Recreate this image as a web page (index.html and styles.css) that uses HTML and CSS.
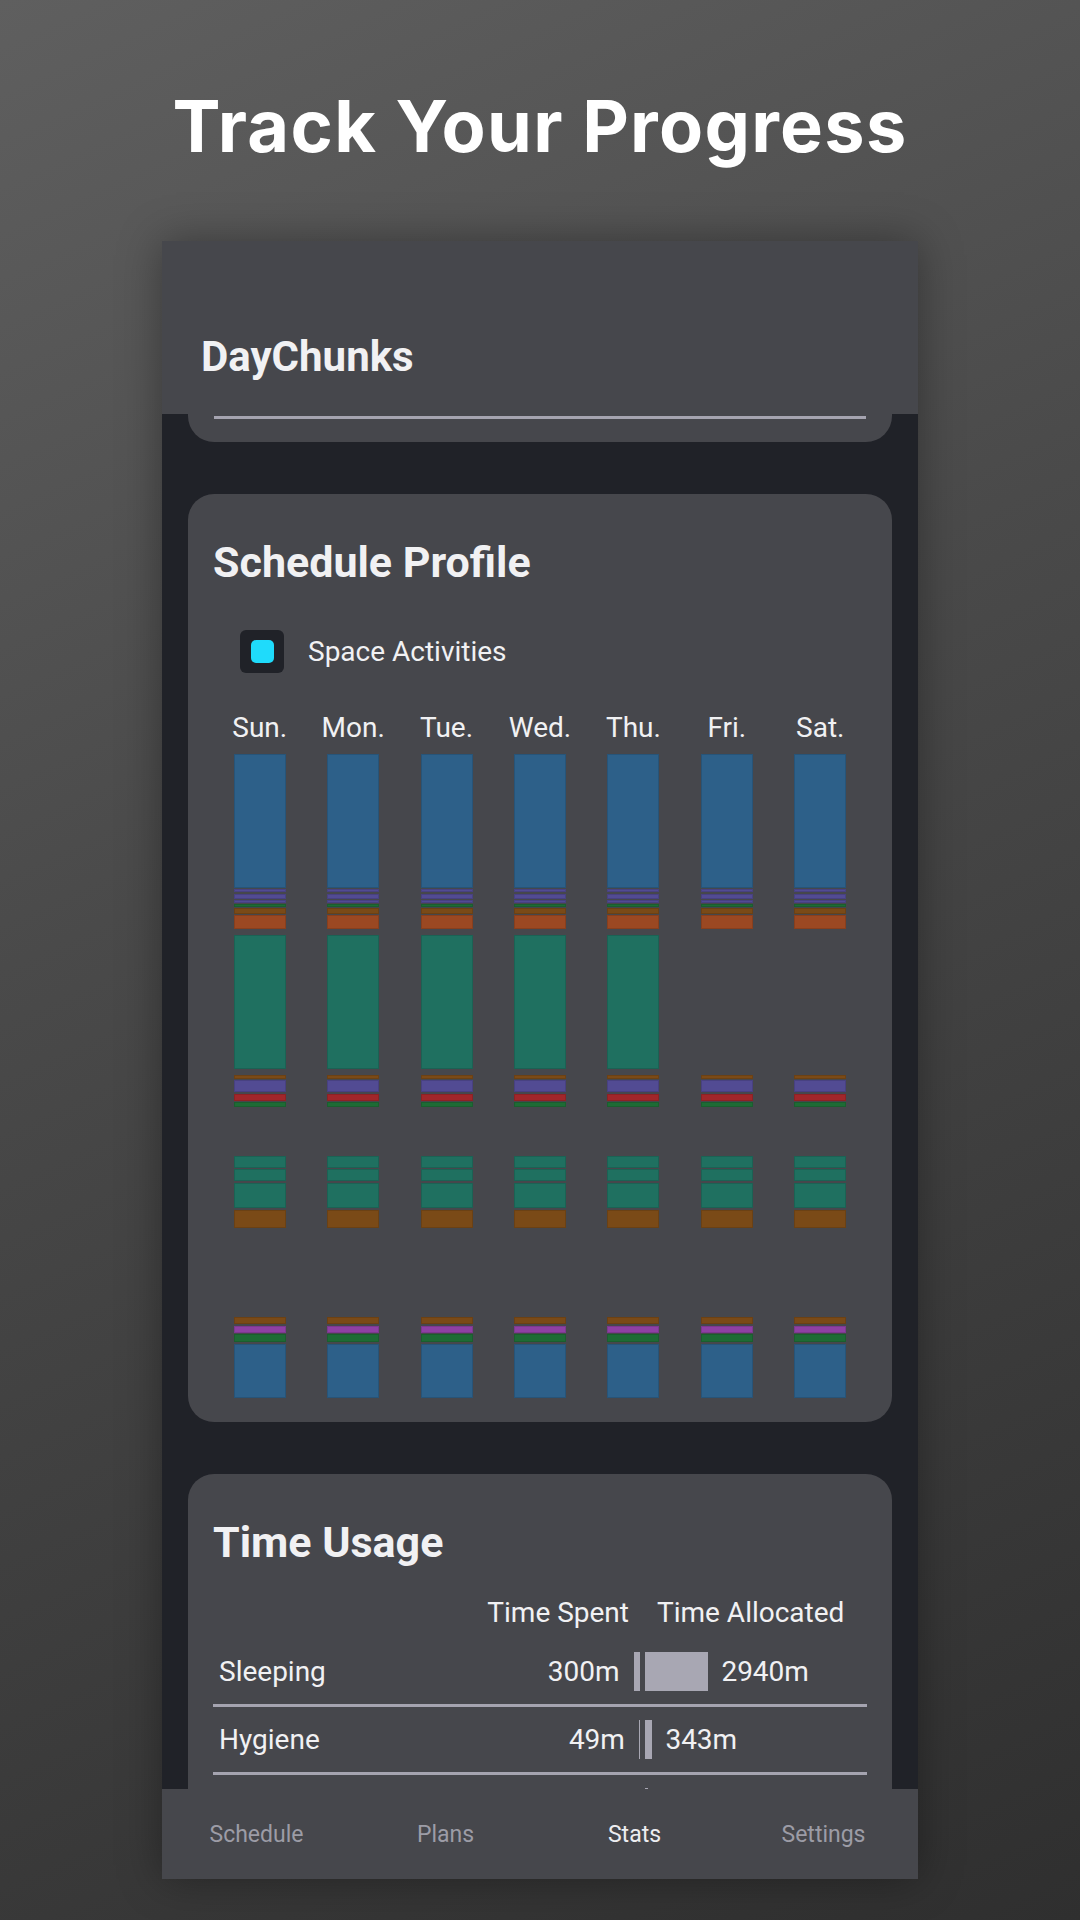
FILE: index.html
```html
<!DOCTYPE html>
<html lang="en">
<head>
    <meta charset="UTF-8">
    <meta name="viewport" content="width=device-width, initial-scale=1.0">
    <title>DayChunks - Track Your Progress</title>
    <link rel="stylesheet" href="styles.css">
</head>
<body>
    <h1 class="headline">Track Your Progress</h1>

    <div class="phone">
        <header class="app_bar">
            <h2>DayChunks</h2>
        </header>

        <main class="scroll">
            <section class="card card_cut">
                <div class="rule"></div>
            </section>

            <section class="card">
                <h3>Schedule Profile</h3>
                <div class="legend">
                    <span class="swatch"><i></i></span>
                    Space Activities
                </div>
                <div class="week" id="week"></div>
            </section>

            <section class="card">
                <h3>Time Usage</h3>
                <div class="usage_head">
                    <span class="spent_h">Time Spent</span>
                    <span class="alloc_h">Time Allocated</span>
                </div>
                <div id="usage"></div>
            </section>
        </main>

        <nav class="tabs">
            <a href="#">Schedule</a>
            <a href="#">Plans</a>
            <a href="#" class="active">Stats</a>
            <a href="#">Settings</a>
        </nav>
    </div>

    <script>
        var days = ['Sun.', 'Mon.', 'Tue.', 'Wed.', 'Thu.', 'Fri.', 'Sat.'];
        // top, height (px on a 644px day), colour, weekdays only
        var blocks = [
            [0, 134, 'blue'],
            [135, 3, 'purple'],
            [139.5, 5.5, 'purple'],
            [146, 2.5, 'purple'],
            [149.5, 3.5, 'green'],
            [154, 6, 'brown'],
            [161, 13.5, 'orange'],
            [180.5, 134.5, 'teal', true],
            [321, 3.5, 'brown'],
            [326, 11.5, 'purple'],
            [339.5, 7, 'red'],
            [348, 5, 'green'],
            [402, 11.5, 'teal'],
            [415, 11.5, 'teal'],
            [429, 24.5, 'teal'],
            [455.5, 18, 'brown'],
            [562.5, 7, 'brown'],
            [571.5, 7, 'magenta'],
            [580, 8, 'green'],
            [589.5, 54, 'blue']
        ];

        var week = document.getElementById('week');
        for (var d = 0; d < days.length; d++) {
            var col = document.createElement('div');
            col.className = 'day';
            var label = document.createElement('span');
            label.className = 'day_name';
            label.textContent = days[d];
            col.append(label);

            var bar = document.createElement('div');
            bar.className = 'bar';
            for (var b = 0; b < blocks.length; b++) {
                if (blocks[b][3] && d >= 5) continue; // no work on fri/sat
                var seg = document.createElement('div');
                seg.className = 'seg ' + blocks[b][2];
                seg.style.top = blocks[b][0] + 'px';
                seg.style.height = blocks[b][1] + 'px';
                bar.append(seg);
            }
            col.append(bar);
            week.append(col);
        }

        // name, spent, allocated (minutes)
        var usage = [
            ['Sleeping', 300, 2940],
            ['Hygiene', 49, 343],
            ['', 0, 140] // next row, scrolled under the tab bar
        ];
        var scale = 63.4 / 2940;
        var table = document.getElementById('usage');
        usage.forEach(function (u) {
            var row = document.createElement('div');
            row.className = 'usage_row';
            var spentText = u[0] ? u[1] + 'm' : '';
            var allocText = u[0] ? u[2] + 'm' : '';
            row.innerHTML =
                '<span class="name">' + u[0] + '</span>' +
                '<span class="spent">' + spentText + '<i class="meter" style="width:' + (u[1] * scale).toFixed(1) + 'px"></i></span>' +
                '<span class="alloc"><i class="meter" style="width:' + (u[2] * scale).toFixed(1) + 'px"></i>' + allocText + '</span>';
            table.append(row);
        });
    </script>
</body>
</html>
```

FILE: styles.css
```css
* {
    margin: 0;
    padding: 0;
    box-sizing: border-box;
}

body {
    width: 1080px;
    height: 1920px;
    overflow: hidden;
    display: flex;
    flex-direction: column;
    align-items: center;
    background: linear-gradient(155deg, #5f5f5f 0%, #4a4a4a 40%, #2f2f2f 100%);
    font-family: Roboto, "Noto Sans", sans-serif;
    color: #f1f1f3;
}

a {
    color: inherit;
    text-decoration: none;
}

i {
    display: block;
}

.headline {
    margin-top: 86px;
    height: 80px;
    line-height: 80px;
    font-family: Inter, "Open Sans", sans-serif;
    font-size: 72px;
    font-weight: 700;
    letter-spacing: 1.3px;
    color: #fff;
}

/* phone frame */
.phone {
    margin-top: 75px;
    width: 756px;
    height: 1638px;
    display: flex;
    flex-direction: column;
    background: #202228;
    box-shadow: 0 0 40px rgba(0, 0, 0, 0.35);
}

.app_bar {
    height: 173px;
    flex-shrink: 0;
    padding: 91px 39px 0;
    background: #46474c;
}

.app_bar h2 {
    font-size: 42px;
    line-height: 50px;
    font-weight: 700;
}

.scroll {
    flex: 1;
    overflow: hidden;
    display: flex;
    flex-direction: column;
    gap: 52px;
    padding: 0 26px;
}

.card {
    flex-shrink: 0;
    padding: 42px 25px 24px;
    border-radius: 26px;
    background: #46474c;
}

.card h3 {
    font-size: 43px;
    line-height: 52px;
    font-weight: 700;
}

.card_cut {
    height: 28px;
    padding: 2px 26px 0;
    border-radius: 0 0 26px 26px;
}

.rule {
    height: 3px;
    background: #a5a4b0;
}

/* schedule profile */
.legend {
    display: flex;
    align-items: center;
    gap: 24px;
    margin: 42px 0 0 27px;
    font-size: 28px;
}

.swatch {
    width: 44px;
    height: 43px;
    display: flex;
    align-items: center;
    justify-content: center;
    border-radius: 6px;
    background: #202228;
}

.swatch i {
    width: 23px;
    height: 23px;
    border-radius: 5px;
    background: #1fdbfb;
}

.week {
    display: grid;
    grid-template-columns: repeat(7, 1fr);
    margin-top: 38px;
}

.day {
    display: flex;
    flex-direction: column;
    align-items: center;
}

.day_name {
    font-size: 28px;
    line-height: 34px;
    margin-bottom: 9px;
}

.bar {
    position: relative;
    width: 52px;
    height: 644px;
}

.seg {
    position: absolute;
    left: 0;
    right: 0;
    box-shadow: inset 0 0 0 1px rgba(0, 0, 0, 0.12);
}

.blue { background: #2d6089; }
.purple { background: #524b93; }
.green { background: #1e6b35; }
.brown { background: #7a4a17; }
.orange { background: #9b4822; }
.teal { background: #1f7060; }
.red { background: #a1262a; }
.magenta { background: #8f40a3; }

/* time usage */
.usage_head {
    display: flex;
    margin-top: 28px;
    font-size: 28px;
    line-height: 34px;
}

.spent_h {
    margin-left: auto;
    width: 215px;
    padding-right: 11px;
    text-align: right;
}

.alloc_h {
    width: 222px;
    margin-left: 5px;
    padding-left: 12px;
}

#usage {
    margin-top: 9px;
}

.usage_row {
    display: flex;
    align-items: center;
    min-height: 68px;
    padding: 13px 0;
    border-bottom: 3px solid #a5a4b0;
    font-size: 28px;
    line-height: 34px;
}

.name {
    flex: 1;
    padding-left: 6px;
}

.spent {
    width: 215px;
    display: flex;
    justify-content: flex-end;
    align-items: center;
    gap: 14px;
}

.alloc {
    width: 222px;
    margin-left: 5px;
    display: flex;
    align-items: center;
    gap: 13px;
}

.meter {
    height: 39px;
    background: #a8a7b3;
}

/* bottom tabs */
.tabs {
    height: 90px;
    flex-shrink: 0;
    display: grid;
    grid-template-columns: repeat(4, 1fr);
    align-items: center;
    text-align: center;
    background: #46474c;
    font-size: 23px;
    color: #9c9ca6;
}

.tabs .active {
    color: #ededf0;
}
```
